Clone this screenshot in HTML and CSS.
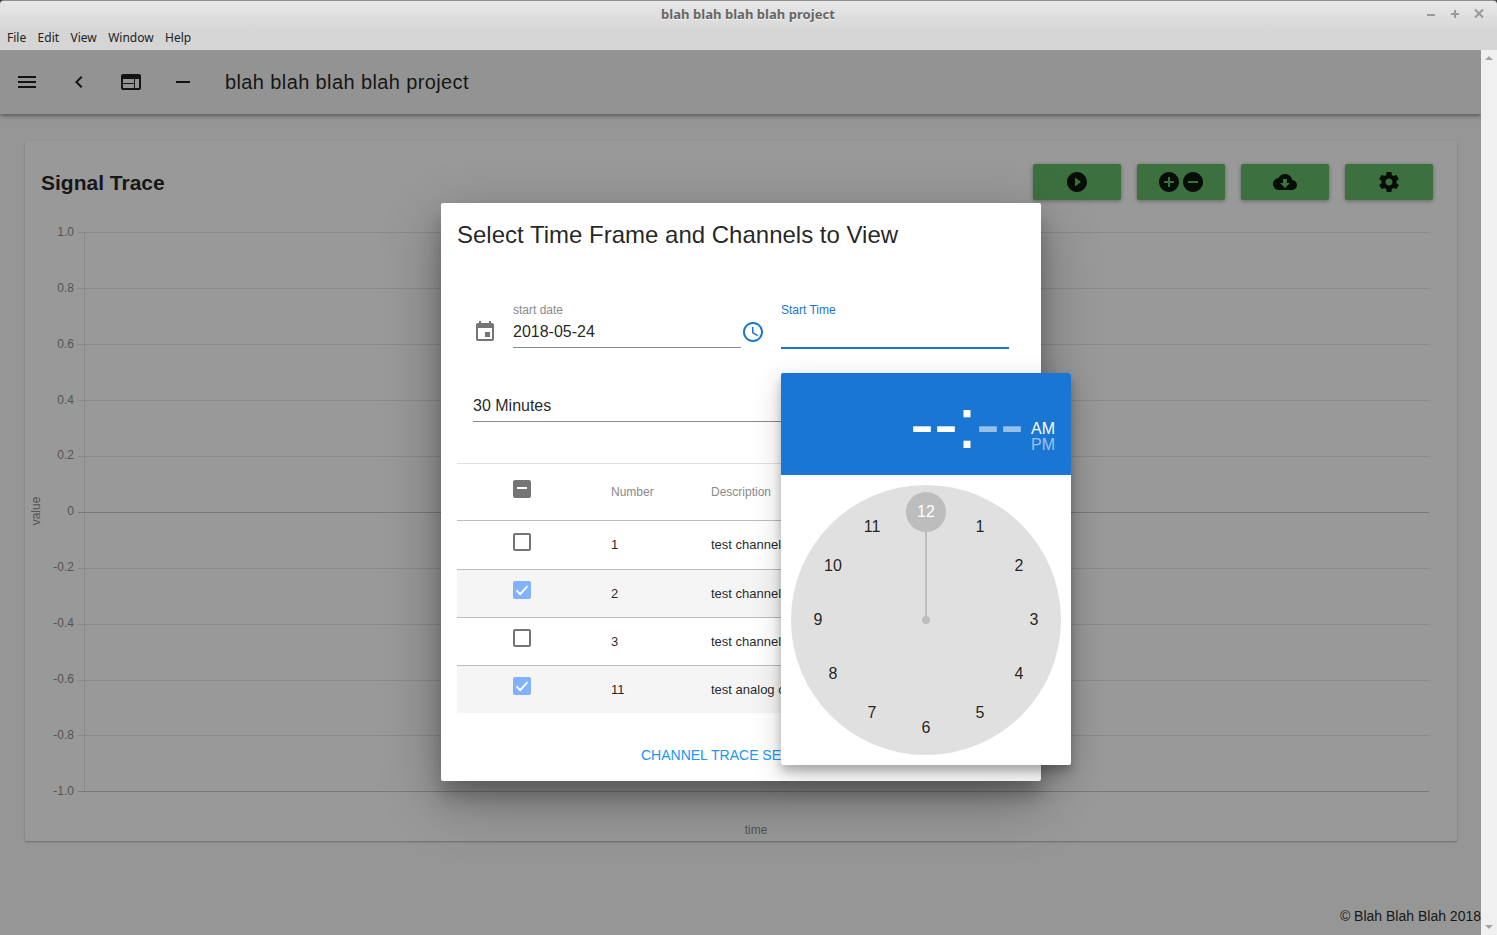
FILE: index.html
```html
<!DOCTYPE html>
<html lang="en">
<head>
  <meta charset="UTF-8">
  <meta name="viewport" content="width=device-width, initial-scale=1.0">
  <title>blah blah blah blah project</title>
  <link rel="stylesheet" href="styles.css">
</head>
<body>

  <!-- window frame -->
  <div class="titlebar">
    <div class="title-row">
      <span class="win-title">blah blah blah blah project</span>
      <div class="win-buttons">
        <svg width="12" height="12" viewBox="0 0 12 12"><path d="M2 7h8"/></svg>
        <svg width="12" height="12" viewBox="0 0 12 12"><path d="M2 6h8M6 2v8"/></svg>
        <svg width="12" height="12" viewBox="0 0 12 12"><path d="M2 1.5l8 8M10 1.5l-8 8"/></svg>
      </div>
    </div>
    <div class="menu-row">
      <span>File</span>
      <span>Edit</span>
      <span>View</span>
      <span>Window</span>
      <span>Help</span>
    </div>
  </div>

  <div class="window-body">
    <div class="main">

      <header class="appbar">
        <svg class="icon" viewBox="0 0 24 24"><path d="M3 18h18v-2H3v2zm0-5h18v-2H3v2zm0-7v2h18V6H3z"/></svg>
        <svg class="icon" viewBox="0 0 24 24"><path d="M15.41 7.41L14 6l-6 6 6 6 1.41-1.41L10.83 12z"/></svg>
        <svg class="icon" viewBox="0 0 24 24"><path d="M20 4H4c-1.1 0-1.99.9-1.99 2L2 18c0 1.1.9 2 2 2h16c1.1 0 2-.9 2-2V6c0-1.1-.9-2-2-2zm-5 14H4v-4h11v4zm0-5H4V9h11v4zm5 5h-4V9h4v9z"/></svg>
        <svg class="icon" viewBox="0 0 24 24"><path d="M19 13H5v-2h14v2z"/></svg>
        <span class="appbar-title">blah blah blah blah project</span>
      </header>

      <section class="card">
        <div class="card-head">
          <h2>Signal Trace</h2>
          <div class="actions">
            <button class="green-btn">
              <svg class="icon" viewBox="0 0 24 24"><path d="M12 2C6.48 2 2 6.48 2 12s4.48 10 10 10 10-4.48 10-10S17.52 2 12 2zm-2 14.5v-9l6 4.5-6 4.5z"/></svg>
            </button>
            <button class="green-btn">
              <svg class="icon" viewBox="0 0 24 24"><path d="M12 2C6.48 2 2 6.48 2 12s4.48 10 10 10 10-4.48 10-10S17.52 2 12 2zm5 11h-4v4h-2v-4H7v-2h4V7h2v4h4v2z"/></svg>
              <svg class="icon" viewBox="0 0 24 24"><path d="M12 2C6.48 2 2 6.48 2 12s4.48 10 10 10 10-4.48 10-10S17.52 2 12 2zm5 11H7v-2h10v2z"/></svg>
            </button>
            <button class="green-btn">
              <svg class="icon" viewBox="0 0 24 24"><path d="M19.35 10.04C18.67 6.59 15.64 4 12 4 9.11 4 6.6 5.64 5.35 8.04 2.34 8.36 0 10.91 0 14c0 3.31 2.69 6 6 6h13c2.76 0 5-2.24 5-5 0-2.64-2.05-4.78-4.65-4.96zM17 13l-5 5-5-5h3V9h4v4h3z"/></svg>
            </button>
            <button class="green-btn">
              <svg class="icon" viewBox="0 0 24 24"><path d="M19.43 12.98c.04-.32.07-.64.07-.98s-.03-.66-.07-.98l2.11-1.65c.19-.15.24-.42.12-.64l-2-3.46c-.12-.22-.39-.3-.61-.22l-2.49 1c-.52-.4-1.08-.73-1.69-.98l-.38-2.65C14.46 2.18 14.25 2 14 2h-4c-.25 0-.46.18-.49.42l-.38 2.65c-.61.25-1.17.59-1.69.98l-2.49-1c-.23-.09-.49 0-.61.22l-2 3.46c-.13.22-.07.49.12.64l2.11 1.65c-.04.32-.07.65-.07.98s.03.66.07.98l-2.11 1.65c-.19.15-.24.42-.12.64l2 3.46c.12.22.39.3.61.22l2.49-1c.52.4 1.08.73 1.69.98l.38 2.65c.03.24.24.42.49.42h4c.25 0 .46-.18.49-.42l.38-2.65c.61-.25 1.17-.59 1.69-.98l2.49 1c.23.09.49 0 .61-.22l2-3.46c.12-.22.07-.49-.12-.64l-2.11-1.65zM12 15.5c-1.93 0-3.5-1.57-3.5-3.5s1.57-3.5 3.5-3.5 3.5 1.57 3.5 3.5-1.57 3.5-3.5 3.5z"/></svg>
            </button>
          </div>
        </div>

        <!-- viewBox uses page coordinates so the grid is easy to read -->
        <svg class="chart" width="1432" height="624" viewBox="25 217 1432 624">
          <g class="grid">
            <path d="M78 232.5H1429"/>
            <path d="M78 288.5H1429"/>
            <path d="M78 344.5H1429"/>
            <path d="M78 400.5H1429"/>
            <path d="M78 456.5H1429"/>
            <path d="M78 568.5H1429"/>
            <path d="M78 624.5H1429"/>
            <path d="M78 680.5H1429"/>
            <path d="M78 735.5H1429"/>
            <path d="M84.5 232V791"/>
          </g>
          <g class="axis">
            <path d="M78 512.5H1429"/>
            <path d="M78 791.5H1429"/>
          </g>
          <g class="ticks">
            <text x="74" y="236">1.0</text>
            <text x="74" y="292">0.8</text>
            <text x="74" y="348">0.6</text>
            <text x="74" y="404">0.4</text>
            <text x="74" y="459">0.2</text>
            <text x="74" y="515">0</text>
            <text x="74" y="571">-0.2</text>
            <text x="74" y="627">-0.4</text>
            <text x="74" y="683">-0.6</text>
            <text x="74" y="739">-0.8</text>
            <text x="74" y="795">-1.0</text>
          </g>
          <text class="axis-label" x="756" y="834">time</text>
          <text class="axis-label" transform="translate(40 511) rotate(-90)">value</text>
        </svg>
      </section>

      <footer class="footer">© Blah Blah Blah 2018</footer>

      <div class="backdrop"></div>

      <div class="dialog">
        <h3 class="dialog-title">Select Time Frame and Channels to View</h3>

        <div class="date-row">
          <svg class="icon grey-icon" viewBox="0 0 24 24"><path d="M17 12h-5v5h5v-5zM16 1v2H8V1H6v2H5c-1.11 0-1.99.9-1.99 2L3 19c0 1.1.89 2 2 2h14c1.1 0 2-.9 2-2V5c0-1.1-.9-2-2-2h-1V1h-2zm3 18H5V8h14v11z"/></svg>
          <div class="field">
            <label>start date</label>
            <div class="field-value">2018-05-24</div>
          </div>
          <svg class="icon blue-icon" viewBox="0 0 24 24"><path d="M11.99 2C6.47 2 2 6.48 2 12s4.47 10 9.99 10C17.52 22 22 17.52 22 12S17.52 2 11.99 2zM12 20c-4.42 0-8-3.58-8-8s3.58-8 8-8 8 3.58 8 8-3.58 8-8 8zm.5-13H11v6l5.25 3.15.75-1.23-4.5-2.67z"/></svg>
          <div class="field field-active">
            <label>Start Time</label>
            <div class="field-value"></div>
          </div>
        </div>

        <div class="select-field">30 Minutes</div>

        <table class="channels">
          <thead>
            <tr>
              <th class="col-check"><span class="cb cb-mixed"></span></th>
              <th class="col-num">Number</th>
              <th>Description</th>
            </tr>
          </thead>
          <tbody>
            <tr>
              <td class="col-check"><span class="cb"></span></td>
              <td>1</td>
              <td>test channel 1</td>
            </tr>
            <tr class="selected">
              <td class="col-check">
                <span class="cb cb-on"><svg viewBox="0 0 18 18"><path d="M3.5 9.5l3.7 3.7 7.3-8"/></svg></span>
              </td>
              <td>2</td>
              <td>test channel 2</td>
            </tr>
            <tr>
              <td class="col-check"><span class="cb"></span></td>
              <td>3</td>
              <td>test channel 3</td>
            </tr>
            <tr class="selected">
              <td class="col-check">
                <span class="cb cb-on"><svg viewBox="0 0 18 18"><path d="M3.5 9.5l3.7 3.7 7.3-8"/></svg></span>
              </td>
              <td>11</td>
              <td>test analog channel</td>
            </tr>
          </tbody>
        </table>

        <div class="dialog-actions">
          <span class="text-btn">CHANNEL TRACE SETTINGS</span>
        </div>
      </div>

      <!-- time picker popup, lies over the dialog -->
      <div class="picker">
        <div class="picker-head">
          <div class="clock-digits">
            <span>--</span><span class="colon">:</span><span class="faded">--</span>
          </div>
          <div class="ampm">
            <span>AM</span>
            <span class="faded">PM</span>
          </div>
        </div>
        <div class="picker-body">
          <div class="clock-face">
            <div class="hand"></div>
            <div class="hand-pin"></div>
            <div class="hand-knob"></div>
            <span class="num" style="left: 135px; top: 27px; color: #fff">12</span>
            <span class="num" style="left: 189px; top: 42px">1</span>
            <span class="num" style="left: 228px; top: 81px">2</span>
            <span class="num" style="left: 243px; top: 135px">3</span>
            <span class="num" style="left: 228px; top: 189px">4</span>
            <span class="num" style="left: 189px; top: 228px">5</span>
            <span class="num" style="left: 135px; top: 243px">6</span>
            <span class="num" style="left: 81px; top: 228px">7</span>
            <span class="num" style="left: 42px; top: 189px">8</span>
            <span class="num" style="left: 27px; top: 135px">9</span>
            <span class="num" style="left: 42px; top: 81px">10</span>
            <span class="num" style="left: 81px; top: 42px">11</span>
          </div>
        </div>
      </div>

    </div>

    <div class="scrollbar">
      <span class="arrow-up"></span>
      <span class="arrow-down"></span>
    </div>
  </div>

</body>
</html>
```

FILE: styles.css
```css
html {
  background-color: #3a3a3a;
}
body {
  margin: 0;
  height: 935px;
  overflow: hidden;
  font-family: "Liberation Sans", Arial, sans-serif;
  color: rgba(0, 0, 0, 0.87);
}

/* window frame */
.titlebar {
  height: 49px;
  border-top: 1px solid #8e8e8e;
  border-radius: 4px 4px 0 0;
  background: linear-gradient(#e8e8e8, #d5d5d5 32px, #d5d5d5);
  font-family: "Noto Sans", sans-serif;
}
.title-row {
  position: relative;
  height: 26px;
  padding-right: 1px;
  display: flex;
  align-items: center;
  justify-content: center;
}
.win-title {
  font-size: 13px;
  font-weight: 700;
  letter-spacing: 0.04px;
  color: #666;
  text-shadow: 0 1px 0 rgba(255, 255, 255, 0.6);
}
.win-buttons {
  position: absolute;
  right: 12px;
  top: 7px;
  display: flex;
  gap: 12px;
}
.win-buttons svg {
  fill: none;
  stroke: #9a9a9a;
  stroke-width: 2;
}
.menu-row {
  height: 20px;
  padding-left: 7px;
  display: flex;
  align-items: center;
  gap: 11.4px;
  font-size: 12px;
  color: #222;
}

.window-body {
  display: flex;
  height: 885px;
}
.main {
  position: relative;
  flex: 1;
  overflow: hidden;
  background-color: #fafafa;
}
.scrollbar {
  position: relative;
  width: 16px;
  background-color: #f0f0f0;
}
.arrow-up, .arrow-down {
  position: absolute;
  left: 4px;
  border-left: 4px solid transparent;
  border-right: 4px solid transparent;
}
.arrow-up {
  top: 6px;
  border-bottom: 4px solid #a3a3a3;
}
.arrow-down {
  bottom: 6px;
  border-top: 4px solid #a3a3a3;
}

/* app bar */
.icon {
  display: block;
  width: 24px;
  height: 24px;
  fill: currentColor;
  flex: none;
}
.appbar {
  height: 64px;
  padding-left: 15px;
  display: flex;
  align-items: center;
  gap: 28px;
  background-color: #f5f5f5;
  box-shadow: 0 2px 4px rgba(0, 0, 0, 0.4);
}
.appbar-title {
  margin-left: 2px;
  font-size: 20px;
  letter-spacing: 0.385px;
}

/* chart card */
.card {
  width: 1432px;
  height: 700px;
  margin: 27px 0 0 25px;
  border-radius: 2px;
  background-color: #fff;
  box-shadow: 0 1px 2px rgba(0, 0, 0, 0.3);
}
.card-head {
  height: 76px;
  padding: 23px 24px 0 16px;
  box-sizing: border-box;
  display: flex;
  justify-content: space-between;
}
.card-head h2 {
  margin: 6px 0 0;
  font-size: 21px;
  line-height: 26px;
}
.actions {
  display: flex;
  gap: 16px;
}
.green-btn {
  width: 88px;
  height: 36px;
  padding: 0;
  border: 0;
  border-radius: 2px;
  display: flex;
  align-items: center;
  justify-content: center;
  background-color: #66bb6a;
  color: rgba(0, 0, 0, 0.87);
  box-shadow: 0 1px 4px rgba(0, 0, 0, 0.35);
}
.chart {
  display: block;
}
.grid path {
  stroke: #e6e6e6;
  fill: none;
}
.axis path {
  stroke: #c8c8c8;
  fill: none;
}
.ticks text {
  font-size: 12px;
  fill: #8e8e8e;
  text-anchor: end;
}
.axis-label {
  font-size: 12px;
  fill: #8e8e8e;
  text-anchor: middle;
}

.footer {
  margin-top: 66px;
  text-align: right;
  font-size: 14px;
  line-height: 18px;
}

/* modal */
.backdrop {
  position: absolute;
  top: 0;
  left: 0;
  right: 0;
  bottom: 0;
  background-color: rgba(0, 0, 0, 0.4);
}
.dialog {
  position: absolute;
  left: 441px;
  top: 153px;
  width: 600px;
  height: 578px;
  padding: 16px;
  box-sizing: border-box;
  border-radius: 2px;
  background-color: #fff;
  box-shadow: 0 19px 60px rgba(0, 0, 0, 0.3), 0 15px 20px rgba(0, 0, 0, 0.22);
}
.dialog-title {
  margin: 0;
  font-size: 24px;
  line-height: 32px;
  font-weight: 400;
}
.date-row {
  margin-top: 52px;
  padding-left: 16px;
  display: flex;
  align-items: flex-end;
}
.date-row .icon {
  margin-bottom: 4px;
}
.grey-icon {
  color: #757575;
  margin-right: 16px;
}
.blue-icon {
  color: #1976d2;
  margin-right: 16px;
}
.field {
  width: 228px;
  height: 45px;
  box-sizing: border-box;
  border-bottom: 1px solid #8a8a8a;
}
.field label {
  display: block;
  font-size: 12px;
  line-height: 14px;
  color: #8a8a8a;
}
.field-value {
  margin-top: 5px;
  font-size: 16px;
  line-height: 20px;
}
.field-active {
  height: 46px;
  margin-bottom: -1px;
  border-bottom: 2px solid #1976d2;
}
.field-active label {
  color: #1976d2;
}
.select-field {
  margin: 48px 16px 0;
  padding-bottom: 5px;
  font-size: 16px;
  line-height: 20px;
  border-bottom: 1px solid #8a8a8a;
}

/* channel table */
.channels {
  width: 100%;
  margin-top: 41px;
  border-collapse: separate;
  border-spacing: 0;
  border-top: 1px solid #e0e0e0;
  font-size: 13px;
}
.channels th {
  height: 56px;
  padding: 0;
  font-size: 12px;
  font-weight: 400;
  text-align: left;
  color: #8a8a8a;
  border-bottom: 1px solid #bdbdbd;
}
.channels td {
  height: 47px;
  padding: 0;
  border-bottom: 1px solid #bdbdbd;
}
.channels tbody tr:last-child td {
  height: 47px;
  border-bottom: 0;
}
.channels tbody tr:first-child td {
  height: 47px;
  padding-bottom: 1px;
}
.channels .selected {
  background-color: #f5f5f5;
}
.col-check {
  width: 98px;
  padding-left: 56px !important;
}
.col-num {
  width: 100px;
}
.cb {
  display: block;
  width: 18px;
  height: 18px;
  margin-bottom: 7px;
  box-sizing: border-box;
  border: 2px solid #757575;
  border-radius: 2px;
  position: relative;
}
.channels th .cb {
  margin-bottom: 6px;
}
.channels tbody tr:first-child .cb {
  margin-bottom: 5px;
}
.cb-mixed {
  background-color: #757575;
}
.cb-mixed::after {
  content: "";
  position: absolute;
  left: 2px;
  top: 5px;
  width: 10px;
  height: 2px;
  background-color: #fff;
}
.cb-on {
  border: 0;
  background-color: #82b1ff;
}
.cb-on svg {
  display: block;
  fill: none;
  stroke: #fff;
  stroke-width: 1.8;
}
.dialog-actions {
  margin-top: 33px;
  padding-left: 184px;
  white-space: nowrap;
}
.text-btn {
  font-size: 14px;
  line-height: 18px;
  color: #2196f3;
}

/* time picker */
.picker {
  position: absolute;
  left: 781px;
  top: 323px;
  width: 290px;
  height: 392px;
  border-radius: 2px;
  background-color: #fff;
  box-shadow: 0 10px 30px rgba(0, 0, 0, 0.19), 0 6px 10px rgba(0, 0, 0, 0.23);
}
.picker-head {
  height: 102px;
  padding-right: 16px;
  border-radius: 2px 2px 0 0;
  box-sizing: border-box;
  display: flex;
  justify-content: flex-end;
  align-items: center;
  background-color: #1976d2;
  color: #fff;
}
.clock-digits {
  display: flex;
  font-size: 72px;
  line-height: 72px;
  margin: -2px 7px 0 0;
}
.colon {
  margin: 0 -1px 0 -1px;
}
.faded {
  opacity: 0.55;
}
.ampm {
  display: flex;
  flex-direction: column;
  margin-top: 26px;
  font-size: 16px;
  line-height: 16px;
}
.picker-body {
  padding: 10px;
}
.clock-face {
  position: relative;
  width: 270px;
  height: 270px;
  border-radius: 50%;
  background-color: #e0e0e0;
}
.hand {
  position: absolute;
  left: 134px;
  top: 27px;
  width: 2px;
  height: 108px;
  background-color: #bdbdbd;
}
.hand-pin {
  position: absolute;
  left: 131px;
  top: 131px;
  width: 8px;
  height: 8px;
  border-radius: 50%;
  background-color: #bdbdbd;
}
.hand-knob {
  position: absolute;
  left: 115px;
  top: 7px;
  width: 40px;
  height: 40px;
  border-radius: 50%;
  background-color: #bdbdbd;
}
.num {
  position: absolute;
  transform: translate(-50%, -50%);
  font-size: 16px;
  line-height: 20px;
}
```
